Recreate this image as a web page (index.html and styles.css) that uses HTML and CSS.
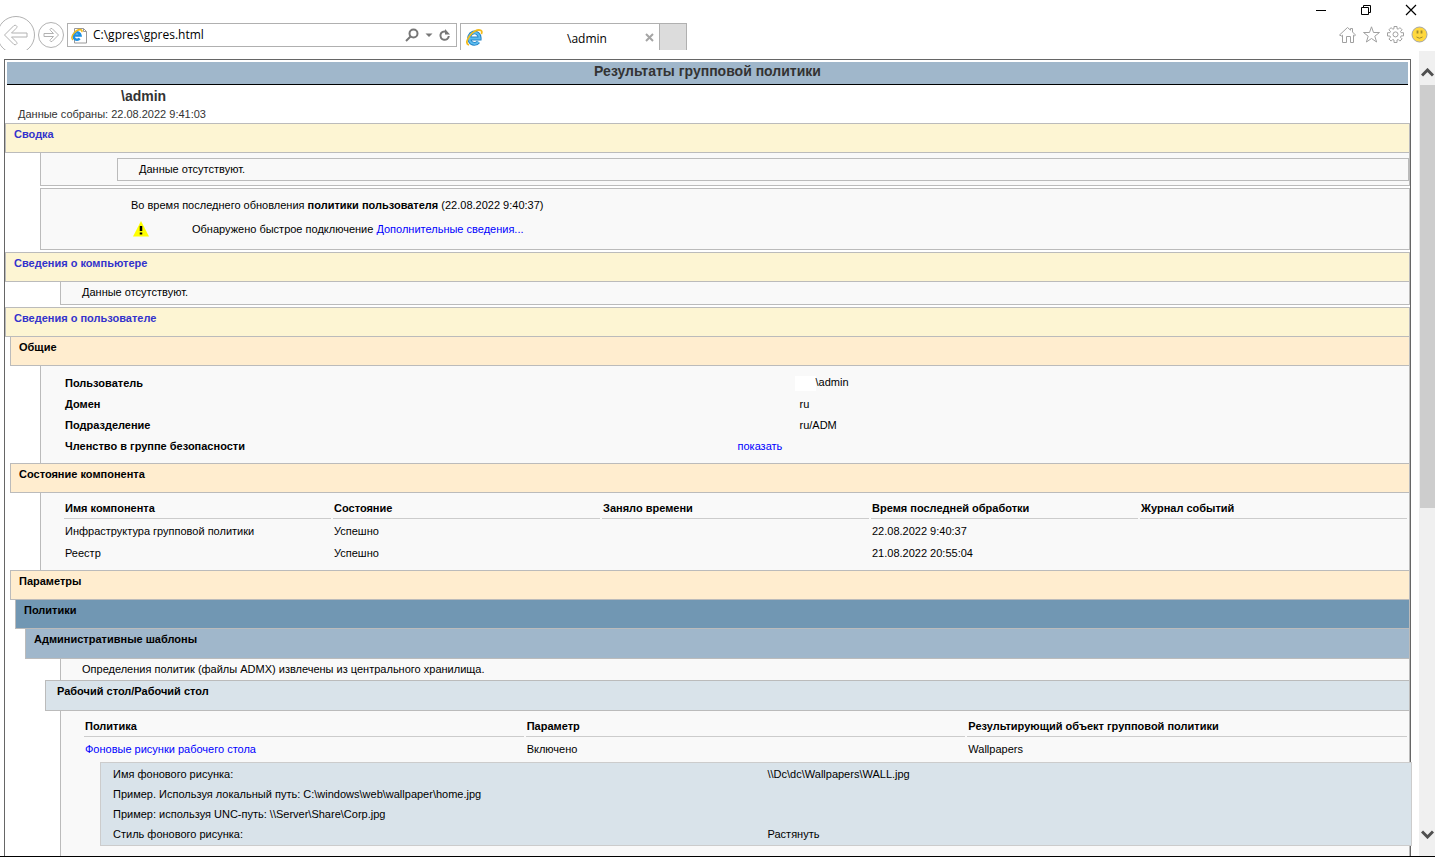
FILE: index.html
```html
<!DOCTYPE html>
<html lang="ru">
<head>
  <meta charset="UTF-8">
  <meta name="viewport" content="width=device-width, initial-scale=1.0">
  <title>\admin</title>
  <link rel="stylesheet" href="styles.css">
</head>
<body>
  <header class="browser">
    <div class="window-buttons">
      <button type="button" aria-label="Свернуть">
        <svg width="12" height="12" viewBox="0 0 12 12"><path d="M1 6.500h10" stroke="#000" fill="none"/></svg>
      </button>
      <button type="button" aria-label="Восстановить">
        <svg width="12" height="12" viewBox="0 0 12 12"><path d="M1.500 3.500h7v7h-7zM3.500 3.500v-2h7v7h-2" stroke="#000" fill="none"/></svg>
      </button>
      <button type="button" aria-label="Закрыть">
        <svg width="12" height="12" viewBox="0 0 12 12"><path d="M1 1l10 10M11 1L1 11" stroke="#000" stroke-width="1.200" fill="none"/></svg>
      </button>
    </div>
    <div class="toolbar">
      <button type="button" class="nav-back" aria-label="Назад">
        <svg width="36" height="34" viewBox="0 0 36 34" fill="none" stroke="#b2b2b2">
          <circle cx="16" cy="19" r="18.500"/>
          <path d="M4.500 19L14 9.500q2-1 3 1 0 1-1 2L11.500 17H27v4H11.500l4.500 4.500q1 1 1 2-1 2-3 1z"/>
        </svg>
      </button>
      <button type="button" class="nav-forward" aria-label="Вперёд">
        <svg width="26" height="26" viewBox="0 0 26 26" fill="none" stroke="#b2b2b2">
          <circle cx="13" cy="13" r="12.500"/>
          <path d="M20.500 13L14 6.500q-1.500-.5-2 1 0 .5.500 1L15.500 11.500H6v3h9.500l-3 3q-.5.500-.5 1 .5 1.500 2 1z"/>
        </svg>
      </button>
      <div class="address">
        <svg width="16" height="17" viewBox="0 0 16 17" fill="none">
          <path d="M3.500 1.500h9l3 3v11.500h-12z" fill="#fff" stroke="#999"/>
          <path d="M12.500 1.500v3h3" stroke="#999"/>
          <path d="M3 8.500h6.500a3.500 3.700 0 1 0-.8 3" stroke="#1c8fe0" stroke-width="2.500"/>
          <path d="M2 13C-2 10 6 1 10.500 3q1 1 0 2" stroke="#f2bb1d" stroke-width="1.500"/>
        </svg>
        <input type="text" value="C:\gpres\gpres.html" aria-label="Адрес">
        <button type="button" aria-label="Поиск">
          <svg width="14" height="14" viewBox="0 0 14 14" fill="none" stroke="#777" stroke-width="2"><circle cx="8.500" cy="5.500" r="4"/><path d="M5.500 8.500L1 13"/></svg>
        </button>
        <button type="button" aria-label="Показать список адресов">
          <svg width="8" height="14" viewBox="0 0 8 14"><path d="M0.500 5.500h7L4 9z" fill="#777"/></svg>
        </button>
        <button type="button" aria-label="Обновить">
          <svg width="12" height="14" viewBox="0 0 12 14" fill="none"><path d="M7 3.700A4.200 4.200 0 1 0 9.800 8" stroke="#777" stroke-width="2"/><path d="M6 1v5.500h5z" fill="#777"/></svg>
        </button>
      </div>
      <div class="tab">
        <svg width="17" height="17" viewBox="0 0 17 17" fill="none">
          <path d="M4 9.500h9.700A5.300 5.700 0 1 0 12.500 12.800" stroke="#2583c4" stroke-width="3.800"/>
          <path d="M4 9.500h9.700A5.300 5.700 0 1 0 12.500 12.800" stroke="#5bbcf0" stroke-width="2"/>
          <path d="M3 16C-4 14 8-2 15 1.500q1.500 1 .3 3.500" stroke="#f2bb1d" stroke-width="1.800"/>
        </svg>
        <span class="tab-title">\admin</span>
        <button type="button" aria-label="Закрыть вкладку">
          <svg width="9" height="9" viewBox="0 0 9 9"><path d="M1 1l7 7M8 1L1 8" stroke="#a5a5a5" stroke-width="2"/></svg>
        </button>
      </div>
      <button type="button" class="new-tab" aria-label="Новая вкладка"></button>
      <div class="tools">
        <button type="button" aria-label="Домой">
          <svg width="17" height="17" viewBox="0 0 17 17" fill="none" stroke="#a0a0a0"><path d="M.5 9l8-7.500 3 2.700V2.500h2V6l3 3-1 1-1-.8v7.300h-3v-6h-4v6h-4V9.200l-1 .8z"/></svg>
        </button>
        <button type="button" aria-label="Избранное">
          <svg width="17" height="17" viewBox="0 0 17 17" fill="none" stroke="#a0a0a0"><path d="M8.500.8l2 5.700h6l-4.700 3.700 1.800 5.800-5.100-3.500L3.400 16l1.800-5.800L.5 6.500h6z"/></svg>
        </button>
        <button type="button" aria-label="Сервис">
          <svg width="17" height="17" viewBox="0 0 17 17" fill="none" stroke="#a0a0a0"><path d="M7 .5h3v2.200l1.300.5 1.600-1.600 2.200 2.200-1.600 1.600.6 1.300h2.400v3.200h-2.400l-.6 1.400 1.600 1.600-2.200 2.200-1.600-1.600-1.300.5v2.500H7V14l-1.300-.5-1.600 1.600-2.200-2.200 1.600-1.600L2.900 10H.5V6.700h2.400l.6-1.300-1.600-1.600 2.200-2.200 1.600 1.600L7 2.700z"/><circle cx="8.500" cy="8.400" r="2.500"/></svg>
        </button>
        <button type="button" aria-label="Отправить отзыв">
          <svg width="17" height="17" viewBox="0 0 17 17" fill="none"><circle cx="8.500" cy="8.500" r="7.500" fill="#ffd83e" stroke="#a6a6a6"/><path d="M6.500 4.500v3M10.500 4.500v3" stroke="#a08a2c" stroke-width="1.800"/><path d="M5.500 11q3 2.500 6 0" stroke="#a08a2c"/></svg>
        </button>
      </div>
    </div>
  </header>

  <div class="viewport">
    <main class="report">
      <h1>Результаты групповой политики</h1>
      <div class="subject">
        <p class="account">\admin</p>
        <p>Данные собраны: 22.08.2022 9:41:03</p>
      </div>

      <h2 class="he0">Сводка</h2>
      <div class="box summary">
        <div class="inner">Данные отсутствуют.</div>
      </div>
      <div class="box update">
        <p>Во время последнего обновления <b>политики пользователя</b> (22.08.2022 9:40:37)</p>
        <p class="notice">
          <svg width="16" height="16" viewBox="0 0 16 16"><path d="M8 0l8 15.500H0z" fill="#ff0"/><path d="M8 5v5M8 11.500v2" stroke="#000" stroke-width="2.500"/></svg>
          <span>Обнаружено быстрое подключение <a href="#">Дополнительные сведения...</a></span>
        </p>
      </div>

      <h2 class="he0 gap">Сведения о компьютере</h2>
      <div class="box note closed">Данные отсутствуют.</div>

      <h2 class="he0 gap">Сведения о пользователе</h2>
      <h3 class="he1">Общие</h3>
      <div class="box">
        <table class="info">
          <tr><th scope="row">Пользователь</th><td class="user"><span class="blank"></span>\admin</td></tr>
          <tr><th scope="row">Домен</th><td class="value">ru</td></tr>
          <tr><th scope="row">Подразделение</th><td class="value">ru/ADM</td></tr>
          <tr><th scope="row">Членство в группе безопасности</th><td><a href="#">показать</a></td></tr>
        </table>
      </div>

      <h3 class="he1">Состояние компонента</h3>
      <div class="box">
        <table class="list">
          <thead>
            <tr><th>Имя компонента</th><th>Состояние</th><th>Заняло времени</th><th>Время последней обработки</th><th>Журнал событий</th></tr>
          </thead>
          <tbody>
            <tr><td>Инфраструктура групповой политики</td><td>Успешно</td><td></td><td>22.08.2022 9:40:37</td><td></td></tr>
            <tr><td>Реестр</td><td>Успешно</td><td></td><td>21.08.2022 20:55:04</td><td></td></tr>
          </tbody>
        </table>
      </div>

      <h3 class="he1">Параметры</h3>
      <h4 class="he2">Политики</h4>
      <h5 class="he3">Административные шаблоны</h5>
      <div class="box note">Определения политик (файлы ADMX) извлечены из центрального хранилища.</div>
      <h6 class="he4">Рабочий стол/Рабочий стол</h6>
      <div class="box policies">
        <table class="list">
          <thead>
            <tr><th>Политика</th><th>Параметр</th><th>Результирующий объект групповой политики</th></tr>
          </thead>
          <tbody>
            <tr><td><a href="#">Фоновые рисунки рабочего стола</a></td><td>Включено</td><td>Wallpapers</td></tr>
          </tbody>
        </table>
        <table class="details">
          <tr><td>Имя фонового рисунка:</td><td>\\Dc\dc\Wallpapers\WALL.jpg</td></tr>
          <tr><td>Пример. Используя локальный путь: C:\windows\web\wallpaper\home.jpg</td><td></td></tr>
          <tr><td>Пример: используя UNC-путь: \\Server\Share\Corp.jpg</td><td></td></tr>
          <tr><td>Стиль фонового рисунка:</td><td>Растянуть</td></tr>
        </table>
      </div>
    </main>

    <div class="scrollbar">
      <button type="button" aria-label="Вверх">
        <svg width="13" height="9" viewBox="0 0 13 9"><path d="M1 7.500L6.500 2 12 7.500" stroke="#505050" stroke-width="3" fill="none"/></svg>
      </button>
      <div class="track"><div class="thumb"></div></div>
      <button type="button" aria-label="Вниз">
        <svg width="13" height="9" viewBox="0 0 13 9"><path d="M1 1.500L6.500 7 12 1.500" stroke="#505050" stroke-width="3" fill="none"/></svg>
      </button>
    </div>
  </div>
</body>
</html>
```
FILE: styles.css
```css
* {
  box-sizing: border-box;
}
body {
  display: flex;
  flex-direction: column;
  height: 100vh;
  margin: 0;
  overflow: hidden;
  background: #fff;
  border-bottom: 1px solid #000;
  color: #000;
  font-family: "Liberation Sans", Arial, sans-serif;
  font-size: 11px;
  line-height: 16px;
}
h1, h2, h3, h4, h5, h6, p {
  margin: 0;
}
button {
  display: flex;
  align-items: center;
  justify-content: center;
  padding: 0;
  border: none;
  background: none;
}
svg {
  display: block;
  flex: none;
}
a {
  color: #00f;
  text-decoration: none;
}

/* browser frame */
.browser {
  flex: none;
  height: 50px;
  overflow: hidden;
}
.window-buttons {
  display: flex;
  justify-content: flex-end;
  height: 16px;
  padding: 4px 2px 0 0;
}
.window-buttons button {
  width: 45px;
  height: 12px;
}
.toolbar {
  display: flex;
  height: 34px;
}
.nav-back {
  width: 36px;
}
.nav-forward {
  width: 26px;
  margin: 6px 3px 0 2px;
  height: 26px;
}
.address {
  display: flex;
  align-items: center;
  flex: 0 0 390px;
  height: 24px;
  margin-top: 7px;
  padding: 0 5px 0 3px;
  gap: 6px;
  border: 1px solid #b0b0b0;
}
.address input {
  flex: 1;
  min-width: 0;
  padding: 0;
  border: none;
  outline: none;
  background: none;
  color: #000;
  font: 12px/18px "Open Sans", sans-serif;
}
.tab {
  display: flex;
  align-items: center;
  flex: 0 0 199px;
  height: 30px;
  margin: 7px 0 0 3px;
  padding: 0 5px;
  border: 1px solid #b0b0b0;
  border-width: 1px 0 0 1px;
}
.tab svg {
  margin-top: -3px;
}
.tab-title {
  flex: 1;
  padding-left: 84px;
  font: 12px/18px "Open Sans", sans-serif;
}
.new-tab {
  width: 28px;
  height: 30px;
  margin-top: 7px;
  border: 1px solid #b0b0b0;
  border-bottom: none;
  background: #dcdcdc;
}
.tools {
  display: flex;
  gap: 7px;
  margin: 10px 7px 0 auto;
  height: 17px;
}

/* page area */
.viewport {
  display: flex;
  flex: 1;
  min-height: 0;
  overflow: hidden;
  padding: 9px 0 0 4px;
}
.report {
  display: flex;
  flex-direction: column;
  flex: 1;
  height: 1000px;
  border: 1px solid #666;
}
h1 {
  margin: 2px;
  height: 23px;
  border-bottom: 1px solid #000;
  background: #a0b7cb;
  color: #333;
  font-size: 14px;
  line-height: 18px;
  text-align: center;
}
.subject {
  height: 36px;
  padding-left: 13px;
  color: #333;
}
.account {
  padding-left: 103px;
  font-size: 14px;
  font-weight: bold;
  line-height: 19px;
}

/* section headers */
h2, h3, h4, h5, h6 {
  flex: none;
  height: 30px;
  padding: 2px 8px;
  border: 1px solid #bbb;
  font-size: 11px;
  line-height: 16px;
}
h3, h4, h5, h6 {
  margin-top: -1px;
}
.he0 {
  background: #fdf5d3;
  color: #33c;
}
.gap {
  margin-top: 2px;
}
.he1 {
  margin-left: 5px;
  background: #ffedcf;
}
.he2 {
  margin-left: 10px;
  background: #7197b3;
}
.he3 {
  height: 31px;
  margin-left: 20px;
  background: #a0b7cb;
}
.he4 {
  height: 31px;
  margin-left: 40px;
  padding-left: 11px;
  background: #d9e3ea;
}

/* section content */
.box {
  margin: -1px 0 0 35px;
  border: 1px solid #bbb;
  background: #f9f9f9;
}
.summary {
  padding: 5px 0 4px 76px;
}
.inner {
  padding: 2px 21px 3px;
  border: 1px solid #bbb;
}
.update {
  margin-top: 2px;
  padding: 8px 0 7px 90px;
}
.update p {
  padding-bottom: 5px;
}
.update .notice {
  display: flex;
  gap: 43px;
  padding: 3px 0 5px 2px;
}
.note {
  margin-left: 55px;
  padding: 2px 21px 3px;
}
.closed {
  padding-bottom: 4px;
}
table {
  width: 100%;
  table-layout: fixed;
  text-align: left;
}
th, td {
  padding: 0 1px;
}
.info {
  padding: 5px 0 6px 21px;
  border-spacing: 2px;
}
.info td, .info th {
  height: 19px;
  padding: 1px;
}
.info .user {
  padding-left: 58px;
}
.info .value {
  padding-left: 63px;
}
.blank {
  display: inline-block;
  width: 21px;
  height: 15px;
  background: #fff;
  vertical-align: middle;
}
.list {
  padding: 3px 0 5px 21px;
  border-spacing: 2px;
}
.list th {
  height: 21px;
  border-bottom: 1px solid #ccc;
}
.list td {
  height: 20px;
}
.policies {
  flex: 1;
  margin-left: 55px;
}
.details {
  width: calc(100% - 36px);
  margin: -4px -3px 0 39px;
  padding: 1px 0 1px 11px;
  border: 1px solid #ccc;
  border-spacing: 0;
  background: #d9e3ea;
}
.details td {
  height: 20px;
}
.details td + td {
  padding-left: 6px;
}

/* scrollbar */
.scrollbar {
  display: flex;
  flex-direction: column;
  flex: none;
  width: 16px;
  height: calc(100vh - 52px);
  margin: -8px 0 0 8px;
  background: #f0f0f0;
}
.scrollbar button {
  flex: none;
  width: 16px;
  height: 34px;
  padding-top: 8px;
}
.scrollbar button:last-child {
  padding: 0 0 10px;
}
.track {
  flex: 1;
}
.thumb {
  height: 57.4%;
  margin-left: 1px;
  background: #cdcdcd;
}
```
